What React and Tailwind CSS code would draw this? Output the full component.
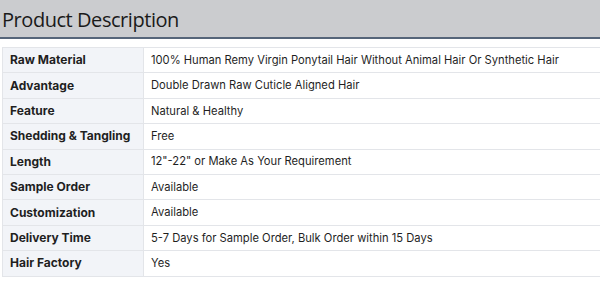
const specs = [
  ['Raw Material', '100% Human Remy Virgin Ponytail Hair Without Animal Hair Or Synthetic Hair'],
  ['Advantage', 'Double Drawn Raw Cuticle Aligned Hair'],
  ['Feature', 'Natural & Healthy'],
  ['Shedding & Tangling', 'Free'],
  ['Length', '12"-22" or Make As Your Requirement'],
  ['Sample Order', 'Available'],
  ['Customization', 'Available'],
  ['Delivery Time', '5-7 Days for Sample Order, Bulk Order within 15 Days'],
  ['Hair Factory', 'Yes'],
];

export default function App() {
  return (
    <div className="w-[600px] h-[282px] bg-white overflow-hidden">
      <div className="h-[39px] bg-[#cbcccf] border-b-2 border-[#56657a] flex items-center pl-[2px]">
        <h2 className="text-[20px] tracking-[-0.45px] text-[#1a1a1a] font-['Open_Sans',sans-serif] leading-none mt-[3px]">
          Product Description
        </h2>
      </div>

      <div className="mt-[8px] ml-[2px] w-[610px] border-t border-l border-[#e3e5e9] font-['Inter',sans-serif] text-[#1f1f1f]">
        {specs.map(([label, value]) => (
          <div key={label} className="flex h-[25.4px] border-b border-[#e3e5e9]">
            <div className="w-[141px] shrink-0 bg-[#f2f4f8] border-r border-[#e3e5e9] pl-[7px] flex items-center font-bold text-[12px]">
              {label}
            </div>
            <div className="flex-1 pl-[7px] flex items-center text-[11.2px]">{value}</div>
          </div>
        ))}
      </div>
    </div>
  );
}
